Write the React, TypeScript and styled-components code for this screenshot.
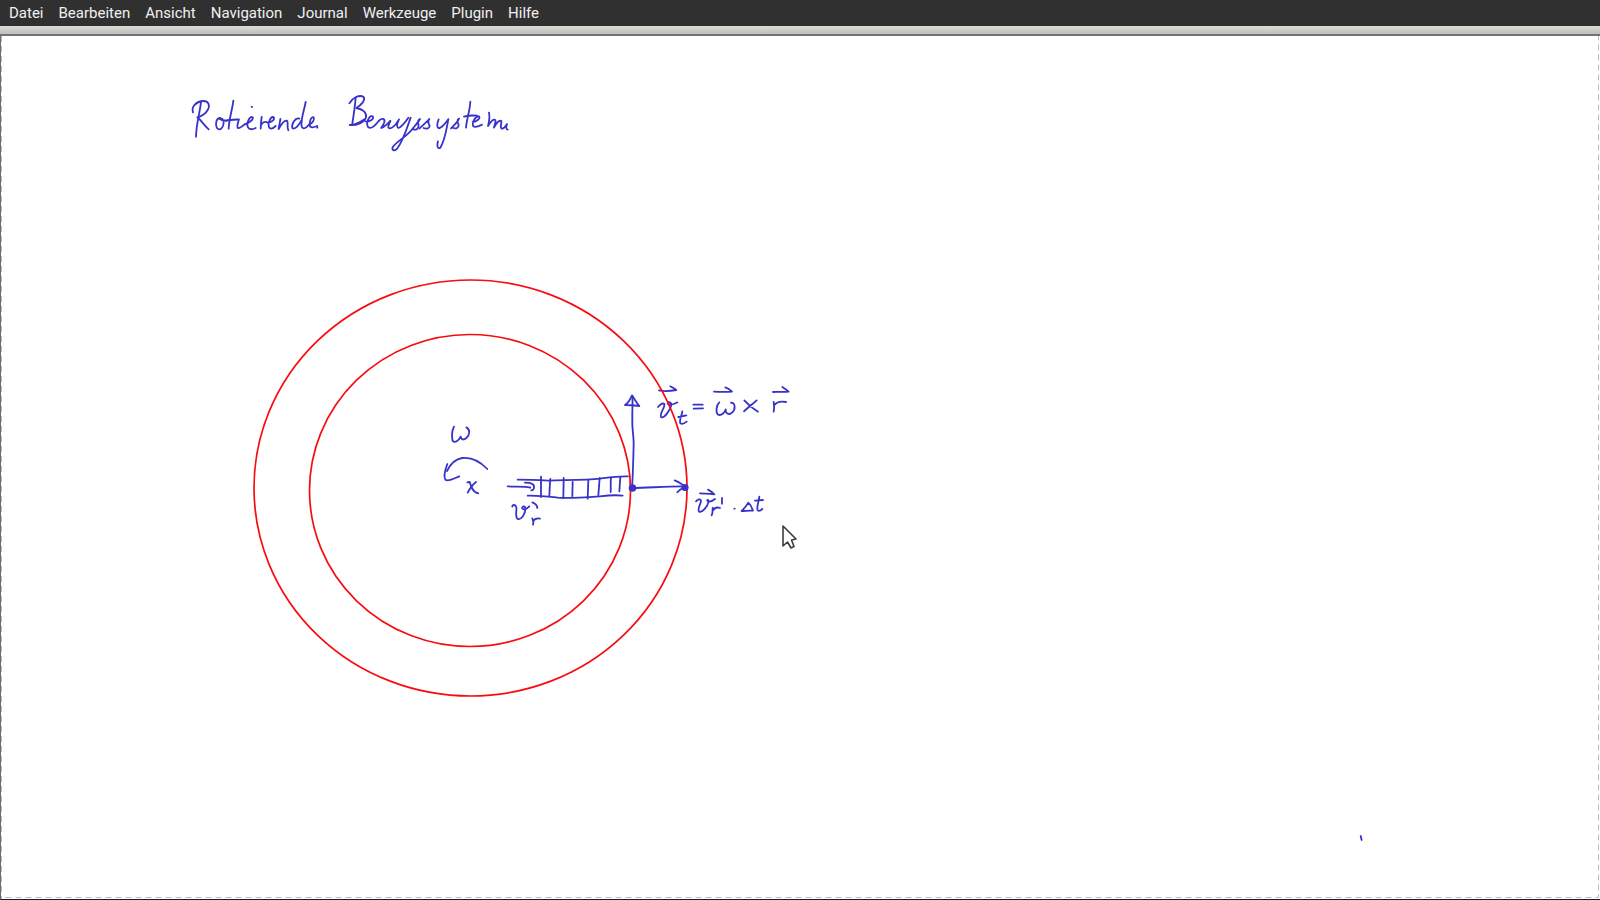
import React from "react";
import styled, { createGlobalStyle } from "styled-components";

const GlobalStyle = createGlobalStyle`
  html, body, #root { height: 100%; }
  body { margin: 0; overflow: hidden; background: #fff; }
`;

const Window = styled.div`
  display: flex;
  flex-direction: column;
  height: 100%;
  font-family: Roboto, "Noto Sans", sans-serif;
`;

const MenuBar = styled.nav`
  display: flex;
  flex: none;
  align-items: center;
  gap: 15px;
  height: 26px;
  padding: 0 9px;
  background: #303030;
`;

const MenuButton = styled.button`
  padding: 0;
  border: 0;
  background: none;
  color: #f0f0f0;
  font: inherit;
  font-size: 15px;
  line-height: 26px;
`;

const ToolStrip = styled.div`
  flex: none;
  height: 8px;
  border-bottom: 2px solid #727274;
  background: linear-gradient(#dcdcd9, #bebebb);
`;

const Page = styled.main`
  display: flex;
  flex: 1;
  min-height: 0;
  border-left: 1px solid #6c6c6c;
  border-bottom: 1px solid #1c1c1e;
`;

const Sheet = styled.svg`
  flex: 1;
  min-width: 0;
  height: 100%;
  background: #fff;
`;

const Ink = styled.g`
  fill: none;
  stroke: #3732c8;
  stroke-width: 5.4;
  stroke-linecap: round;
  stroke-linejoin: round;
`;

const InkDot = styled.circle`
  fill: #3732c8;
`;

const Ring = styled.ellipse`
  fill: none;
  stroke: #f80c10;
  stroke-width: 1.7;
`;

const PageEdge = styled.line`
  stroke: #bcbcbc;
  stroke-width: 1;
  stroke-dasharray: 6 4;
`;

const Pointer = styled.path`
  fill: #fff;
  stroke: #3c3c3c;
  stroke-width: 1.6;
  stroke-linejoin: round;
`;

const menus = ["Datei", "Bearbeiten", "Ansicht", "Navigation", "Journal", "Werkzeuge", "Plugin", "Hilfe"];

type StrokesProps = { x: number; y: number; label: string; paths: string[] };

function Strokes({ x, y, label, paths }: StrokesProps) {
  return (
    <Ink role="img" aria-label={label} transform={`translate(${x} ${y}) scale(0.33333)`}>
      {paths.map((d) => (
        <path key={d} d={d} />
      ))}
    </Ink>
  );
}

const rotierende = [
  "M63 50C61 78 49 112 48 155",
  "M39 82C33 66 48 50 68 48C86 47 91 61 83 75C77 86 66 93 52 97C64 106 72 121 86 133",
  "M121 99C108 99 105 119 111 129C119 139 131 128 131 113C131 104 126 98 118 101C128 108 137 107 145 105",
  "M160 47C157 75 147 101 146 131",
  "M137 108C151 104 162 104 177 103C174 113 170 123 173 129C180 131 187 124 194 118",
  "M194 118C205 115 222 104 218 97C209 91 198 116 204 127C209 136 219 133 227 129",
  "M215 65L216 66",
  "M245 96C243 108 243 119 242 131M243 119C251 108 257 109 264 113",
  "M264 113C276 113 287 101 280 96C269 95 262 122 269 129C274 133 282 128 287 123",
  "M301 102C300 113 297 123 296 132C303 119 311 106 320 107C327 110 319 126 325 136",
  "M358 101C346 95 334 119 337 129C345 136 358 119 364 107",
  "M377 51C373 75 361 104 365 125C370 136 381 126 386 120",
  "M386 120C397 116 405 104 401 97C394 93 386 112 390 124C396 131 405 126 412 123V128",
];

const bezugssysteme = [
  "M47 38C45 66 41 91 37 116",
  "M28 55C38 38 58 28 71 36C77 45 65 59 49 69C67 72 81 82 78 98C71 114 48 123 29 120C47 119 60 112 76 101",
  "M76 109C90 112 104 101 98 94C87 90 76 116 85 127C95 134 107 120 116 108",
  "M116 108C124 97 136 101 133 112C130 122 122 129 124 129C135 126 146 112 151 108",
  "M151 108C145 120 142 129 149 130C161 129 170 115 177 103C171 116 168 126 175 129C185 126 196 111 205 98",
  "M212 98C201 129 190 166 172 190C162 202 154 194 159 185C168 171 202 153 218 131",
  "M218 131C227 120 236 110 240 102C233 106 233 114 236 120C236 131 228 136 220 133",
  "M238 131C250 119 260 111 268 102C262 108 266 117 269 123C268 132 258 132 251 129",
  "M296 103C290 117 290 128 297 130C309 127 317 114 325 103",
  "M325 103C319 135 315 166 301 188C292 194 290 180 294 169",
  "M333 130C345 119 353 111 357 101C350 104 352 113 356 119C357 129 347 132 340 129",
  "M391 50C390 76 380 101 378 128",
  "M372 95C385 91 399 91 411 92",
  "M398 111C410 110 423 100 417 94C405 93 395 114 400 124C407 129 418 123 426 119",
  "M447 83C450 97 447 112 444 123C452 110 460 101 466 105C469 111 462 122 462 128C469 115 477 104 484 108C486 116 478 126 485 131C493 132 497 123 501 117C498 126 497 132 503 134",
];

const omega = ["M72 35C65 49 65 65 68 78C76 85 87 75 92 65C94 76 102 75 109 69C120 60 121 43 109 37"];

const rotation = [
  "M172 162C151 140 125 126 97 129C76 132 61 147 51 168",
  "M52 147C45 165 41 185 46 194C56 201 73 190 88 184",
];

const origin = ["M112 202L119 201C123 213 127 232 145 235", "M138 201C126 210 119 222 113 233"];

const spring = [
  "M53 59C76 59 110 60 145 62C190 60 255 61 300 56C329 52 352 48 384 49",
  "M83 107C112 106 137 109 173 113C209 115 255 112 299 109C325 106 347 104 368 107",
  "M123 50L123 111",
  "M151 57C149 77 149 94 148 107",
  "M191 54L190 114",
  "M218 66L217 109",
  "M265 60L263 116",
  "M299 54L295 106",
  "M333 53C331 69 333 84 332 96",
  "M361 51L358 94",
  "M23 79C48 81 71 78 91 83",
  "M75 68C96 68 104 73 102 83C102 87 98 91 94 91",
];

const radialVelocity = [
  "M37 140C36 133 47 133 49 142C51 152 44 171 53 177C64 181 76 161 76 148C76 137 67 137 66 145C72 153 81 145 88 139",
  "M97 127C107 131 112 137 112 144",
  "M97 175C101 183 101 188 99 194M99 184C105 175 112 174 120 176",
];

const tangentialFormula = [
  "M147 46C164 50 182 48 199 45C193 41 187 36 181 34",
  "M144 96C151 88 158 83 163 87C166 97 148 115 153 126C162 133 180 105 183 94C187 81 172 77 173 86C180 94 192 87 202 82",
  "M217 109C215 123 207 136 211 145C218 149 225 144 230 140M205 126L229 121",
  "M250 89L278 89M251 101L279 100",
  "M312 50C331 51 349 51 366 50C360 44 352 39 346 37",
  "M328 82C318 91 317 113 324 119C334 123 345 113 347 103C346 116 357 121 366 113C377 104 377 83 363 83",
  "M403 76C414 89 429 101 444 110M440 76C429 86 414 97 402 109",
  "M489 51C506 50 521 52 536 50C530 45 523 40 517 36",
  "M491 81C493 91 493 102 491 110M492 91C501 80 515 78 528 81",
];

const displacementFormula = [
  "M270 220C285 221 299 221 313 223C307 217 300 212 294 209",
  "M258 244C264 238 271 236 273 241C274 251 261 264 267 275C277 280 293 258 296 245C296 237 289 240 293 243C299 247 310 241 315 237",
  "M308 263C308 272 308 281 305 286M308 272C314 263 322 261 330 264",
  "M336 234L336 251",
  "M373 266L374 266",
  "M415 248C410 257 402 266 395 273C406 273 417 271 429 272C426 263 421 253 415 248Z",
  "M448 230C447 244 439 260 443 271C448 275 453 271 457 267M435 242L459 240",
];

const arrows = [
  "M67 -72C69 -48 66 -24 67 0C66 25 71 48 71 70C70 119 69 161 66 204",
  "M45 -45C55 -52 62 -64 66 -74C73 -64 79 -52 88 -42C73 -44 59 -45 45 -45",
  "M66 204C113 203 162 200 216 199",
  "M194 181C207 186 216 190 224 201C216 205 208 209 202 217",
];

export default function App() {
  return (
    <Window>
      <GlobalStyle />
      <MenuBar aria-label="Menü">
        {menus.map((name) => (
          <MenuButton key={name} type="button">{name}</MenuButton>
        ))}
      </MenuBar>
      <ToolStrip />
      <Page>
        <Sheet>
          <g transform="translate(-1 -36)">
            <Strokes x={180} y={85} label="Rotierende" paths={rotierende} />
            <Strokes x={340} y={85} label="Bezugssysteme" paths={bezugssysteme} />
            <Strokes x={430} y={415} label="ω" paths={omega} />
            <Strokes x={430} y={415} label="Drehrichtung" paths={rotation} />
            <Strokes x={430} y={415} label="Drehachse" paths={origin} />
            <Strokes x={610} y={375} label="v t = ω × r" paths={tangentialFormula} />
            <Ring cx={470.5} cy={488} rx={216.5} ry={208} />
            <Ring cx={470} cy={490.5} rx={160.5} ry={156} />
            <Strokes x={500} y={460} label="Feder" paths={spring} />
            <Strokes x={500} y={460} label="v r" paths={radialVelocity} />
            <Strokes x={610} y={420} label="v r · Δt" paths={displacementFormula} />
            <Strokes x={610} y={420} label="Geschwindigkeitspfeile" paths={arrows} />
            <InkDot cx="632.5" cy="488" r="3.8" />
            <InkDot cx="685" cy="487.5" r="3.6" />
            <Strokes x={1340} y={820} label="Punkt" paths={["M62 48L65 60"]} />
            <Pointer d="M783 526V546L787.5 542L791 548L794 546.5L791.5 540L796 539Z" />
          </g>
          <PageEdge x1="0.5" y1="0" x2="0.5" y2="100%" />
          <g transform="translate(-1.5 -1.5)">
            <PageEdge x1="6" y1="100%" x2="100%" y2="100%" />
            <PageEdge x1="100%" y1="0" x2="100%" y2="100%" />
          </g>
        </Sheet>
      </Page>
    </Window>
  );
}
